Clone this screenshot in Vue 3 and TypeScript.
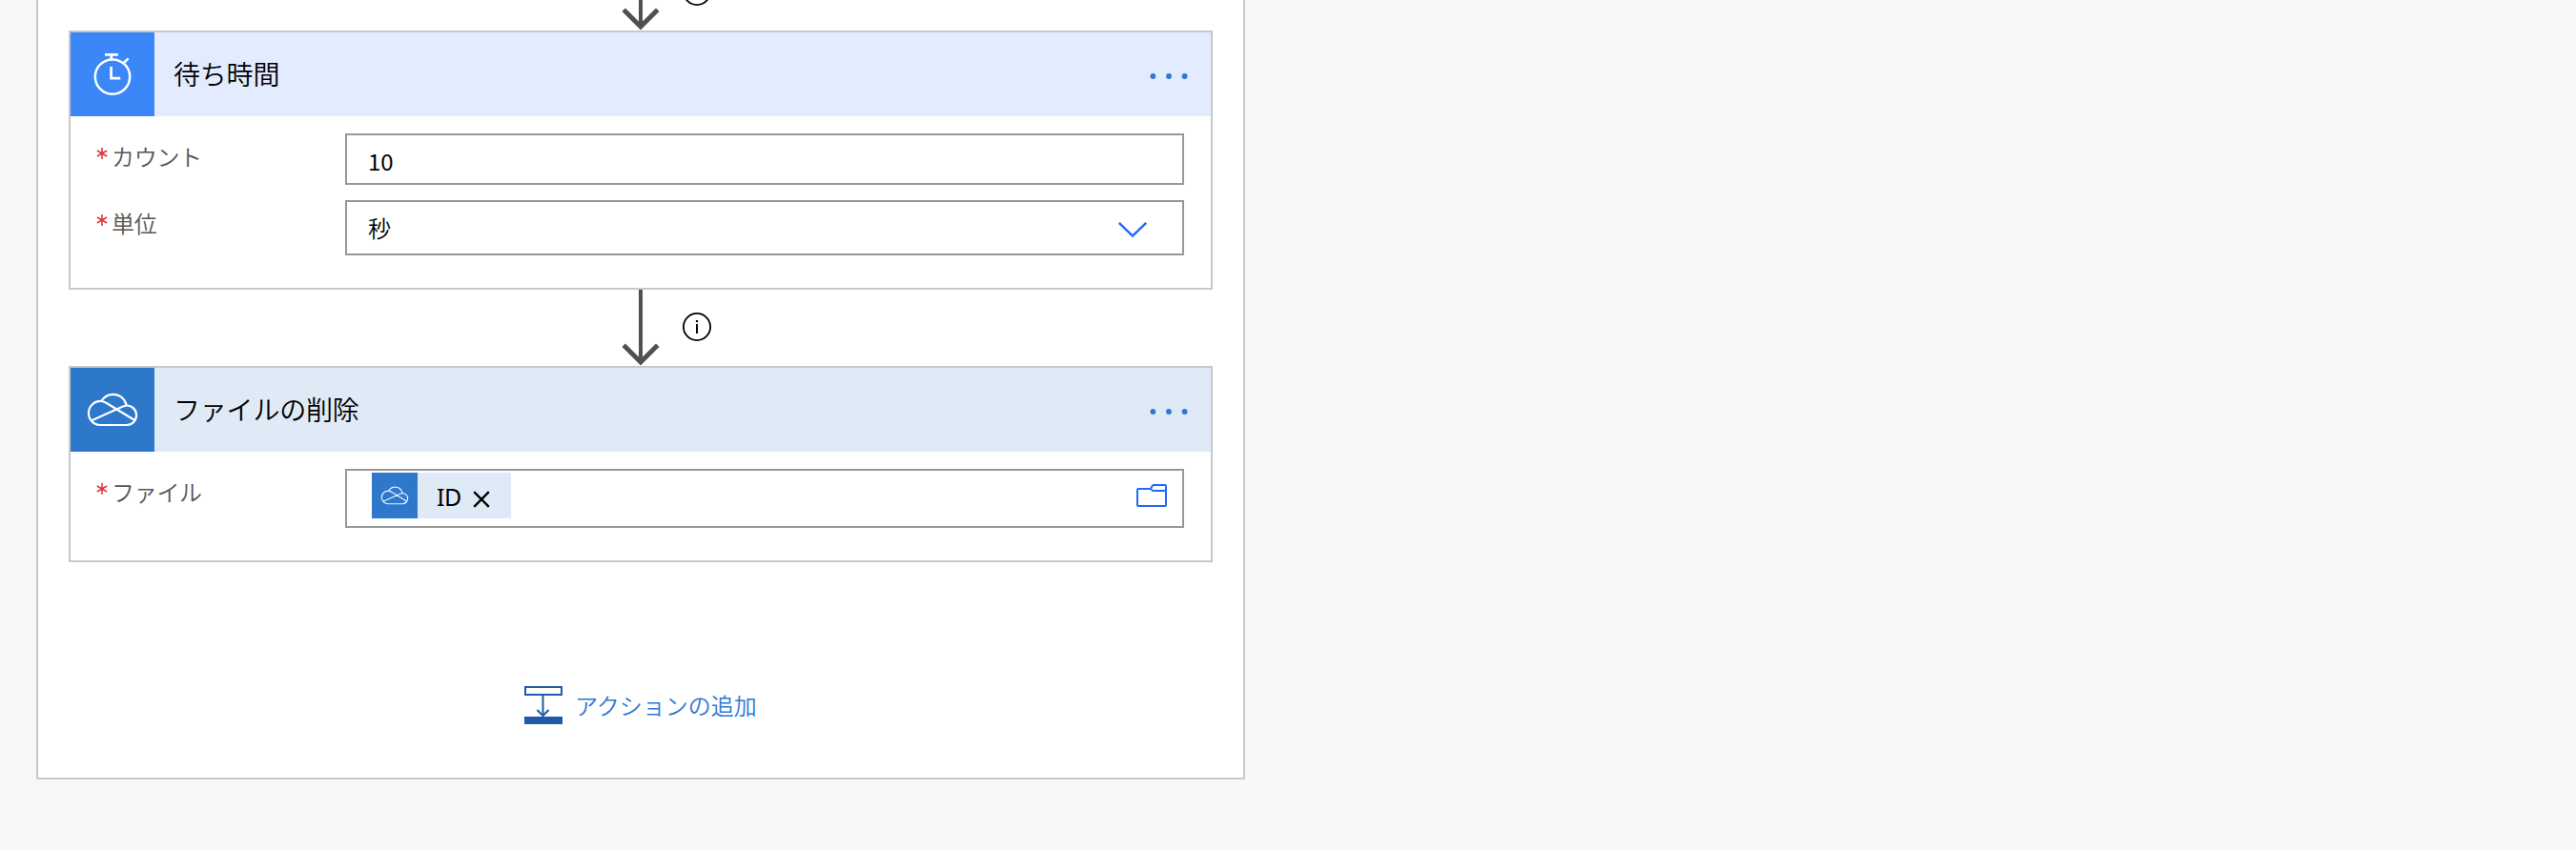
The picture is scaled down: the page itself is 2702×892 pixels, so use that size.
<script setup lang="ts">
interface Field {
  label: string
  kind: 'text' | 'select' | 'file'
  value: string
}
interface Step {
  title: string
  theme: 'timer' | 'cloud'
  fields: Field[]
}

const steps: Step[] = [
  {
    title: '待ち時間',
    theme: 'timer',
    fields: [
      { label: 'カウント', kind: 'text', value: '10' },
      { label: '単位', kind: 'select', value: '秒' },
    ],
  },
  {
    title: 'ファイルの削除',
    theme: 'cloud',
    fields: [{ label: 'ファイル', kind: 'file', value: 'ID' }],
  },
]

const cloudOutline =
  'M30.5 60H59A10.25 10.25 0 0 0 58.7 39.5C57.3 32.4 51.5 27.8 44.5 27.8C39.4 27.8 35 30.4 32.4 35A12.5 12.5 0 0 0 30.5 60Z'
const cloudFolds = 'M32.4 35C35 35.4 37 36.4 39.4 38L67.7 55.3M21.6 55.4L50.5 42.6C53.4 41.2 55.8 39.7 58.7 39.5'
</script>

<template>
  <main class="canvas">
    <section class="scope">
      <template v-for="step in steps" :key="step.title">
        <div class="connector">
          <svg class="arrow" width="120" height="80" viewBox="0 0 120 80">
            <path d="M20 0V76" stroke="#505050" stroke-width="4" fill="none" />
            <path d="M2.2 58.2L20 76L37.8 58.2" stroke="#505050" stroke-width="5" fill="none" />
            <circle cx="79" cy="39" r="14.1" stroke="#000" stroke-width="1.8" fill="none" />
            <rect x="77.9" y="32" width="2.2" height="2.2" fill="#000" />
            <rect x="78" y="36" width="2" height="10" fill="#000" />
          </svg>
        </div>

        <article class="card" :class="step.theme">
          <header class="head">
            <div class="tile">
              <svg v-if="step.theme === 'timer'" width="88" height="88" viewBox="0 0 88 88" fill="none" stroke="#fff">
                <circle cx="44" cy="46.6" r="18.2" stroke-width="2.5" />
                <path d="M36 23.4H49.8M42.8 23V29" stroke-width="2.8" />
                <path d="M55.6 32.2L60.6 27.4" stroke-width="2.5" />
                <path d="M42.6 36V48.2H52.3" stroke-width="2.7" />
              </svg>
              <svg v-else width="88" height="88" viewBox="0 0 88 88">
                <g class="cloud-lines">
                  <path :d="cloudOutline" />
                  <path :d="cloudFolds" />
                </g>
              </svg>
            </div>
            <h2 class="title">{{ step.title }}</h2>
            <svg class="more" width="44" height="8" viewBox="0 0 44 8" fill="#2f78d2">
              <circle cx="5.4" cy="4" r="2.9" />
              <circle cx="22" cy="4" r="2.9" />
              <circle cx="38.6" cy="4" r="2.9" />
            </svg>
          </header>

          <div class="fields">
            <div v-for="field in step.fields" :key="field.label" class="row">
              <div class="label">
                <svg class="star" width="12" height="14" viewBox="0 0 12 14">
                  <path d="M6 1V13M.9 4L11.1 10M11.1 4L.9 10" stroke="#dc3434" stroke-width="1.5" />
                </svg>
                <span>{{ field.label }}</span>
              </div>
              <div class="box" :class="field.kind">
                <span v-if="field.kind !== 'file'" class="value">{{ field.value }}</span>
                <svg v-if="field.kind === 'select'" class="chevron" width="32" height="18" viewBox="0 0 32 18">
                  <path d="M1.8 1.8L16 15.6L30.2 1.8" stroke="#1f69ff" stroke-width="2.5" fill="none" />
                </svg>
                <template v-if="field.kind === 'file'">
                  <div class="chip">
                    <div class="chip-tile">
                      <svg width="48" height="48" viewBox="0 0 88 88">
                        <g class="cloud-lines">
                          <path :d="cloudOutline" />
                          <path :d="cloudFolds" />
                        </g>
                      </svg>
                    </div>
                    <span class="chip-text">{{ field.value }}</span>
                    <svg class="close" width="18" height="18" viewBox="0 0 18 18">
                      <path d="M1.2 1.2L16.8 16.8M16.8 1.2L1.2 16.8" stroke="#000" stroke-width="2.4" />
                    </svg>
                  </div>
                  <svg class="folder" width="32" height="24" viewBox="0 0 32 24" fill="none" stroke="#1f69ff" stroke-width="2">
                    <path d="M15 5H2Q1 5 1 6V22Q1 23 2 23H30Q31 23 31 22V2Q31 1 30 1H18.5Q17.3 1 16.6 2L15.2 4.2Q15 5 15.6 5.6L16.6 6.6Q17 7 18 7H31" />
                  </svg>
                </template>
              </div>
            </div>
          </div>
        </article>
      </template>

      <div class="add">
        <svg width="40" height="40" viewBox="0 0 40 40" fill="none" stroke="#2059a8">
          <rect x="1" y="1" width="38" height="8" stroke-width="2" />
          <path d="M19.5 10V31" stroke-width="2" />
          <path d="M13.4 25L19.5 31L25.6 25" stroke-width="2" />
          <rect x="0" y="32" width="40" height="8" fill="#2059a8" stroke="none" />
        </svg>
        <span>アクションの追加</span>
      </div>
    </section>
  </main>
</template>

<style>
body {
  margin: 0;
  background: #f8f8f8;
}
</style>

<style scoped>
.canvas {
  height: 892px;
  overflow: hidden;
  background: #f8f8f8;
  font-family: "Noto Sans CJK JP", "Noto Sans", sans-serif;
  font-weight: 350;
}
svg {
  display: block;
  flex: none;
}
.scope {
  box-sizing: border-box;
  width: 1268px;
  height: 818px;
  margin-left: 38px;
  padding: 0 32px;
  border: 2px solid #c8c8c8;
  border-top: 0;
  background: #fff;
  overflow: hidden;
}
.connector {
  height: 80px;
  padding-left: 580px;
}
.connector:first-child {
  margin-top: -48px;
}
.card {
  box-sizing: border-box;
  border: 2px solid #c8c8c8;
  background: #fff;
}
.card.timer {
  height: 272px;
}
.card.cloud {
  height: 206px;
}
.head {
  display: flex;
  align-items: center;
  height: 88px;
  padding-right: 22px;
}
.timer .head {
  background: #e3ecfe;
}
.cloud .head {
  background: #e0eaf6;
}
.tile {
  width: 88px;
  height: 88px;
}
.timer .tile {
  background: #3b87f8;
}
.cloud .tile {
  background: #2e78cc;
}
.cloud-lines {
  fill: none;
  stroke: #fff;
  stroke-width: 2.2;
  stroke-linejoin: round;
}
.title {
  flex: 1;
  margin: 0;
  padding: 0 0 3px 20px;
  font-size: 28px;
  line-height: 40px;
  font-weight: 350;
  letter-spacing: -0.2px;
  color: #000;
}
.more {
  margin-top: 4px;
}
.fields {
  display: flex;
  flex-direction: column;
  gap: 16px;
  padding: 18px 28px 0 26px;
}
.row {
  display: flex;
}
.label {
  display: flex;
  align-items: flex-start;
  width: 262px;
  font-size: 24px;
  line-height: 36px;
  letter-spacing: -0.3px;
  color: #555;
  padding-top: 6px;
}
.star {
  margin: 8px 4px 0 1px;
}
.box {
  box-sizing: border-box;
  display: flex;
  align-items: center;
  justify-content: space-between;
  width: 880px;
  border: 2px solid #989898;
  background: #fff;
}
.box.text {
  height: 54px;
  padding: 3px 22px 0;
}
.box.select {
  height: 58px;
  padding: 0 36px 0 22px;
}
.box.file {
  height: 62px;
  align-items: flex-start;
  padding: 2px 16px 0 26px;
}
.value {
  font-size: 24px;
  line-height: 36px;
  color: #000;
}
.text .value {
  font-weight: 400;
}
.chevron {
  margin-top: 4px;
}
.chip {
  display: flex;
  align-items: center;
  width: 146px;
  height: 48px;
  background: #deebf7;
}
.chip-tile {
  width: 48px;
  height: 48px;
  background: #2e78cc;
}
.chip-tile .cloud-lines {
  stroke-opacity: 0.9;
}
.chip-text {
  width: 38px;
  padding: 2px 0 0 20px;
  font-family: "Noto Sans", sans-serif;
  font-size: 25px;
  line-height: 36px;
  font-weight: 400;
  letter-spacing: -0.6px;
  color: #000;
}
.close {
  margin-top: 8px;
}
.folder {
  margin-top: 12px;
}
.add {
  display: flex;
  align-items: center;
  gap: 13px;
  margin-top: 130px;
  padding-left: 478px;
  font-size: 24px;
  line-height: 36px;
  color: #2f78d2;
}
</style>
